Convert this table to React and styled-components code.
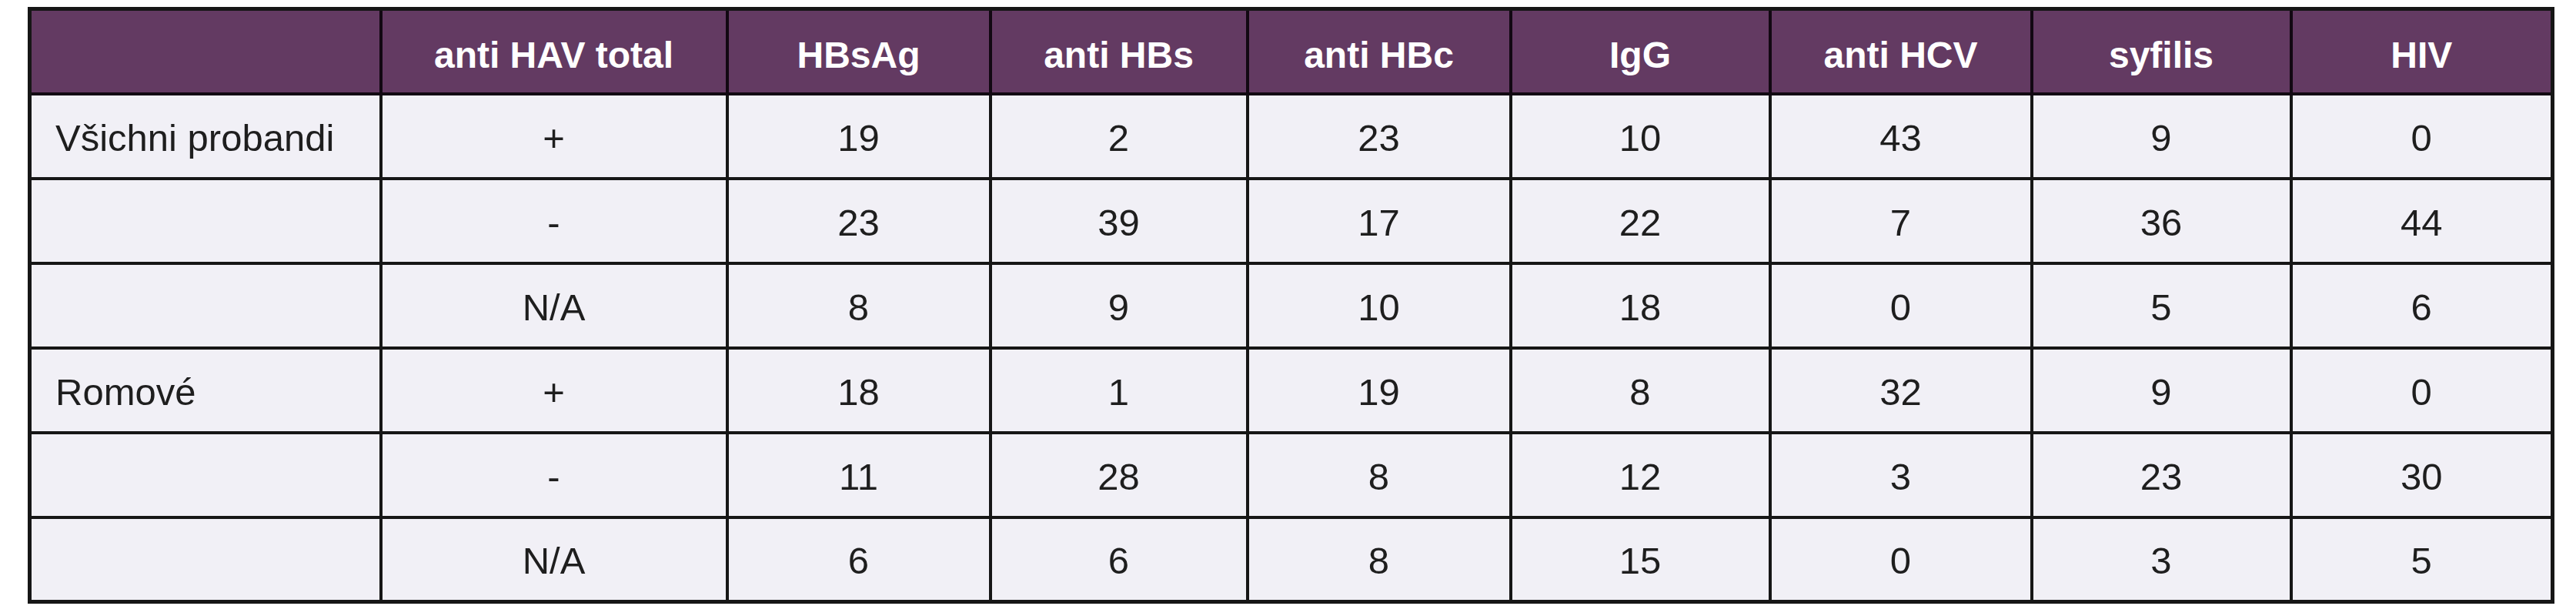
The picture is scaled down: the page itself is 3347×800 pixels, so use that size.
import React from "react";
import styled, { createGlobalStyle } from "styled-components";

const Global = createGlobalStyle`
  html, body { margin: 0; padding: 0; background: #ffffff; }
  body { font-family: "Liberation Sans", Arial, sans-serif; }
`;

const Page = styled.div`
  padding: 9px 0 0 36px;
`;

const Table = styled.table`
  border-collapse: collapse;
  table-layout: fixed;
  width: 3278px;
  border: 5px solid #161616;
  font-family: "Liberation Sans", Arial, sans-serif;
`;

const Col = styled.col`
  width: ${(p) => p.$w}px;
`;

const Row = styled.tr`
  height: 110px;
`;

const HeadCell = styled.th`
  padding: 10px 0 0;
  background: #633a62;
  color: #ffffff;
  font-size: 48px;
  font-weight: 700;
  text-align: center;
  vertical-align: middle;
  border: 4px solid #120812;
  white-space: nowrap;
`;

const Cell = styled.td`
  padding: ${(p) => (p.$left ? "4px 0 0 31px" : "4px 0 0")};
  background: #f1f0f6;
  color: #1e1e1e;
  font-size: 49px;
  font-weight: 400;
  text-align: ${(p) => (p.$left ? "left" : "center")};
  vertical-align: middle;
  border: 4px solid #161616;
  white-space: nowrap;
`;

const widths = [456, 450, 342, 334, 342, 337, 340, 337, 340];
const headers = ["", "anti HAV total", "HBsAg", "anti HBs", "anti HBc", "IgG", "anti HCV", "syfilis", "HIV"];
const rows = [
  ["Všichni probandi", "+", "19", "2", "23", "10", "43", "9", "0"],
  ["", "-", "23", "39", "17", "22", "7", "36", "44"],
  ["", "N/A", "8", "9", "10", "18", "0", "5", "6"],
  ["Romové", "+", "18", "1", "19", "8", "32", "9", "0"],
  ["", "-", "11", "28", "8", "12", "3", "23", "30"],
  ["", "N/A", "6", "6", "8", "15", "0", "3", "5"],
];

export default function App() {
  return (
    <>
      <Global />
      <Page>
        <Table>
          <colgroup>
            {widths.map((w, i) => (
              <Col key={i} $w={w} />
            ))}
          </colgroup>
          <thead>
            <Row>
              {headers.map((h, i) => (
                <HeadCell key={i}>{h}</HeadCell>
              ))}
            </Row>
          </thead>
          <tbody>
            {rows.map((r, ri) => (
              <Row key={ri}>
                {r.map((c, ci) => (
                  <Cell key={ci} $left={ci === 0}>
                    {c}
                  </Cell>
                ))}
              </Row>
            ))}
          </tbody>
        </Table>
      </Page>
    </>
  );
}
